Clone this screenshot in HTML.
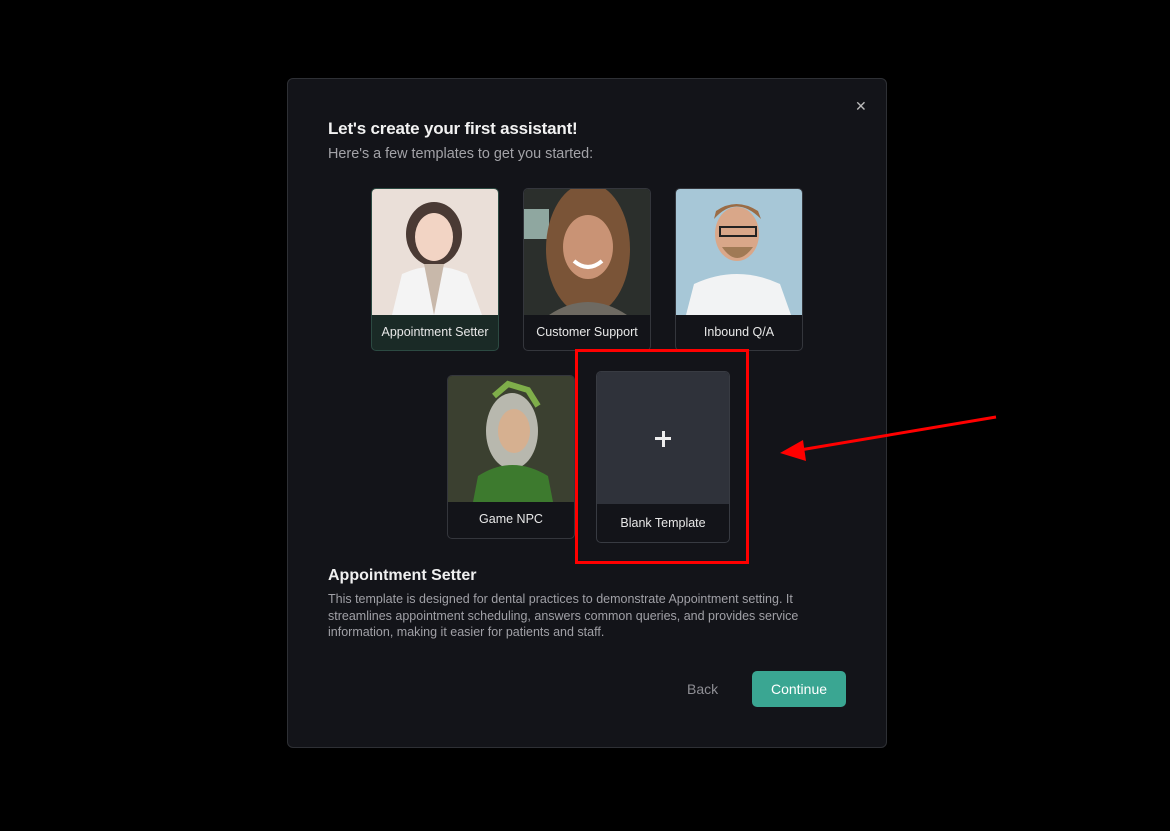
<!DOCTYPE html>
<html><head><meta charset="utf-8"><style>
*{box-sizing:border-box;margin:0;padding:0}
body{width:1170px;height:831px;background:#000;font-family:"Liberation Sans",sans-serif;position:relative;overflow:hidden}
.modal{position:absolute;left:287px;top:78px;width:600px;height:670px;background:#131419;border:1px solid #2e3035;border-radius:6px}
.close{position:absolute;left:567px;top:19px;color:#bbb;font-size:14px}
h1{position:absolute;left:40px;top:40px;font-size:17px;font-weight:bold;color:#f2f2f2;letter-spacing:-0.2px}
.sub{position:absolute;left:40px;top:67px;font-size:14.4px;color:#a3a3a8}
.card{position:absolute;width:128px;border:1px solid #34363c;border-radius:5px;overflow:hidden;background:#131419}
.card .img{display:block;width:100%}
.card .lbl{color:#e8e8e8;font-size:12.5px;text-align:center;line-height:34px}
.sel{background:#1a2a26;border-color:#2c4a42}
h2{position:absolute;left:40px;top:488px;font-size:16px;font-weight:bold;color:#f0f0f0}
.desc{position:absolute;left:40px;top:512px;width:500px;font-size:12.5px;line-height:16.5px;color:#a0a0a6}
.back{position:absolute;left:399px;top:602px;font-size:14px;color:#8e8e94}
.cont{position:absolute;left:464px;top:592px;width:94px;height:36px;background:#3aa692;border-radius:5px;color:#fff;font-size:14px;text-align:center;line-height:36px}
.red{position:absolute;left:575px;top:349px;width:174px;height:215px;border:3px solid #f00}
</style></head><body>
<div class="modal">
<div class="close">✕</div>
<h1>Let's create your first assistant!</h1>
<div class="sub">Here's a few templates to get you started:</div>

<div class="card sel" style="left:83px;top:109px;height:163px">
<svg class="img" width="128" height="126"><rect width="128" height="126" fill="#eadfd8"/><ellipse cx="62" cy="45" rx="28" ry="32" fill="#4a3a34"/><ellipse cx="62" cy="48" rx="19" ry="24" fill="#f2d4c4"/><path d="M20 126 L30 85 Q62 70 95 85 L110 126Z" fill="#f4f4f4"/><path d="M52 75 L62 126 L72 75Z" fill="#c8b8aa"/></svg>
<div class="lbl">Appointment Setter</div></div>

<div class="card" style="left:235px;top:109px;height:163px">
<svg class="img" width="128" height="126"><rect width="128" height="126" fill="#2b2f2c"/><rect x="0" y="20" width="25" height="30" fill="#8fa7a0"/><ellipse cx="64" cy="60" rx="42" ry="66" fill="#7a5437"/><ellipse cx="64" cy="58" rx="25" ry="32" fill="#c99375"/><path d="M50 72 Q64 84 78 72" stroke="#fff" stroke-width="4" fill="none"/><path d="M25 126 Q64 100 103 126Z" fill="#6e6a62"/></svg>
<div class="lbl">Customer Support</div></div>

<div class="card" style="left:387px;top:109px;height:163px">
<svg class="img" width="128" height="126"><rect width="128" height="126" fill="#a7c7d7"/><ellipse cx="61" cy="45" rx="22" ry="27" fill="#d9a789"/><path d="M38 30 Q60 5 85 30 L82 22 Q60 8 40 22Z" fill="#9b6c45"/><rect x="44" y="38" width="36" height="9" fill="none" stroke="#222" stroke-width="2"/><path d="M46 58 Q61 80 77 58Z" fill="#a07a55"/><path d="M10 126 L18 95 Q61 75 104 95 L115 126Z" fill="#f2f3f4"/></svg>
<div class="lbl">Inbound Q/A</div></div>

<div class="card" style="left:159px;top:296px;height:164px">
<svg class="img" width="128" height="126"><rect width="128" height="126" fill="#3b4030"/><ellipse cx="64" cy="55" rx="26" ry="38" fill="#b8b8ae"/><ellipse cx="66" cy="55" rx="16" ry="22" fill="#d6b090"/><path d="M46 20 L60 8 L80 14 L90 30" stroke="#7fae4a" stroke-width="6" fill="none"/><path d="M25 126 L30 100 Q64 78 100 100 L105 126Z" fill="#3d7a2e"/></svg>
<div class="lbl">Game NPC</div></div>

<div class="card" style="left:308px;top:292px;width:134px;height:172px;border-color:#383b42">
<div style="height:132px;background:#2f323a;position:relative"><div style="position:absolute;left:58px;top:65px;width:16px;height:3px;background:#eee"></div><div style="position:absolute;left:64.5px;top:58.5px;width:3px;height:16px;background:#eee"></div></div>
<div class="lbl" style="line-height:38px">Blank Template</div></div>

<h2>Appointment Setter</h2>
<div class="desc">This template is designed for dental practices to demonstrate Appointment setting. It streamlines appointment scheduling, answers common queries, and provides service information, making it easier for patients and staff.</div>
<div class="back">Back</div>
<div class="cont">Continue</div>
</div>
<div class="red"></div>
<svg style="position:absolute;left:0;top:0" width="1170" height="831"><line x1="996" y1="417" x2="800" y2="450" stroke="#f00" stroke-width="3"/><polygon points="780,453 803,440 806,461" fill="#f00"/></svg>
</body></html>
